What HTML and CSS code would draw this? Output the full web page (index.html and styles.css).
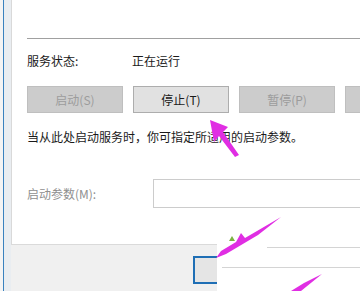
FILE: index.html
```html
<!DOCTYPE html>
<html lang="zh-CN">
<head>
<meta charset="utf-8">
<link rel="stylesheet" href="styles.css">
</head>
<body>
<div class="window">
  <div class="edge"></div>
  <div class="main">
    <div class="panel">
      <div class="rule"></div>
      <div class="status-row">
        <span class="label">服务状态:</span>
        <span class="value">正在运行</span>
      </div>
      <div class="buttons">
        <button class="btn disabled">启动(S)</button>
        <button class="btn">停止(T)</button>
        <button class="btn disabled">暂停(P)</button>
        <button class="btn disabled" aria-label="恢复(R)"></button>
      </div>
      <p class="desc">当从此处启动服务时，你可指定所适用的启动参数。</p>
      <div class="param-row">
        <span class="param-label">启动参数(M):</span>
        <div class="param-input"></div>
      </div>
    </div>
    <div class="footer">
      <button class="btn ok" aria-label="确定"></button>
    </div>
  </div>
</div>
<div class="smear">
  <div class="smear-line l1"></div>
  <div class="smear-line l2"></div>
</div>
<svg class="marks" width="360" height="291" viewBox="0 0 360 291">
  <polygon fill="#e02ee3" points="210,120 228,127 223,132 239,155 235,157 219,136 214,142"/>
  <polygon fill="#7cb342" points="229,241 232,236 235,241"/>
  <polygon fill="#e02ee3" points="216,258 221,251 236,242 241,233 245,238 281,217 258,235 226,254"/>
  <polygon fill="#e02ee3" points="291,291 304,283 322,274 301,291"/>
</svg>
</body>
</html>
```
FILE: styles.css
```css
html, body {
  margin: 0;
  padding: 0;
  width: 360px;
  height: 291px;
  overflow: hidden;
  background: #f0f0f0;
  font-family: "Noto Sans CJK SC", "Noto Sans", sans-serif;
  font-size: 12px;
  color: #1a1a1a;
  position: relative;
}

.window {
  display: flex;
  height: 291px;
}

.edge {
  flex: none;
  width: 11px;
  background: linear-gradient(to right, #f4f4f4 0 3px, #3a82bf 3px 4px, #e9edf1 4px 11px);
}

.main {
  flex: none;
  width: 420px;
  display: flex;
  flex-direction: column;
}

.panel {
  box-sizing: border-box;
  height: 245px;
  background: #fff;
  border-left: 1px solid #d9d9d9;
  border-bottom: 1px solid #dadada;
  padding-left: 15px;
  display: flex;
  flex-direction: column;
}

.rule {
  margin-top: 38px;
  height: 1px;
  background: #a0a0a0;
}

.status-row {
  margin-top: 14px;
  display: flex;
  line-height: 16px;
}

.label {
  width: 105px;
}

.buttons {
  margin-top: 17px;
  display: flex;
  gap: 10px;
}

.btn {
  flex: none;
  box-sizing: border-box;
  width: 96px;
  height: 27px;
  margin: 0;
  padding: 0;
  font-family: inherit;
  font-size: 12px;
  background: #e1e1e1;
  border: 1px solid #adadad;
  color: #1a1a1a;
}

.btn.disabled {
  background: #cccccc;
  border-color: #bfbfbf;
  color: #9c9c9c;
}

.desc {
  margin: 16px 0 0;
  line-height: 16px;
}

.param-row {
  margin-top: 34px;
  display: flex;
  align-items: center;
}

.param-label {
  width: 126px;
  color: #8f8f8f;
}

.param-input {
  box-sizing: border-box;
  width: 240px;
  height: 29px;
  background: #fff;
  border: 1px solid #cccccc;
}

.footer {
  padding-left: 182px;
  padding-top: 11px;
}

.btn.ok {
  width: 75px;
  height: 28px;
  border: 2px solid #1f6fb5;
  background: #e5e5e5;
}

.smear {
  position: absolute;
  left: 217px;
  top: 244px;
  width: 143px;
  height: 47px;
  background: #ffffff;
}

.smear-line {
  position: absolute;
  right: 0;
  height: 1px;
  background: #d4d4d4;
}

.smear-line.l1 {
  top: 3px;
  left: 50px;
}

.smear-line.l2 {
  top: 23px;
  left: 5px;
}

.marks {
  position: absolute;
  left: 0;
  top: 0;
}
```
